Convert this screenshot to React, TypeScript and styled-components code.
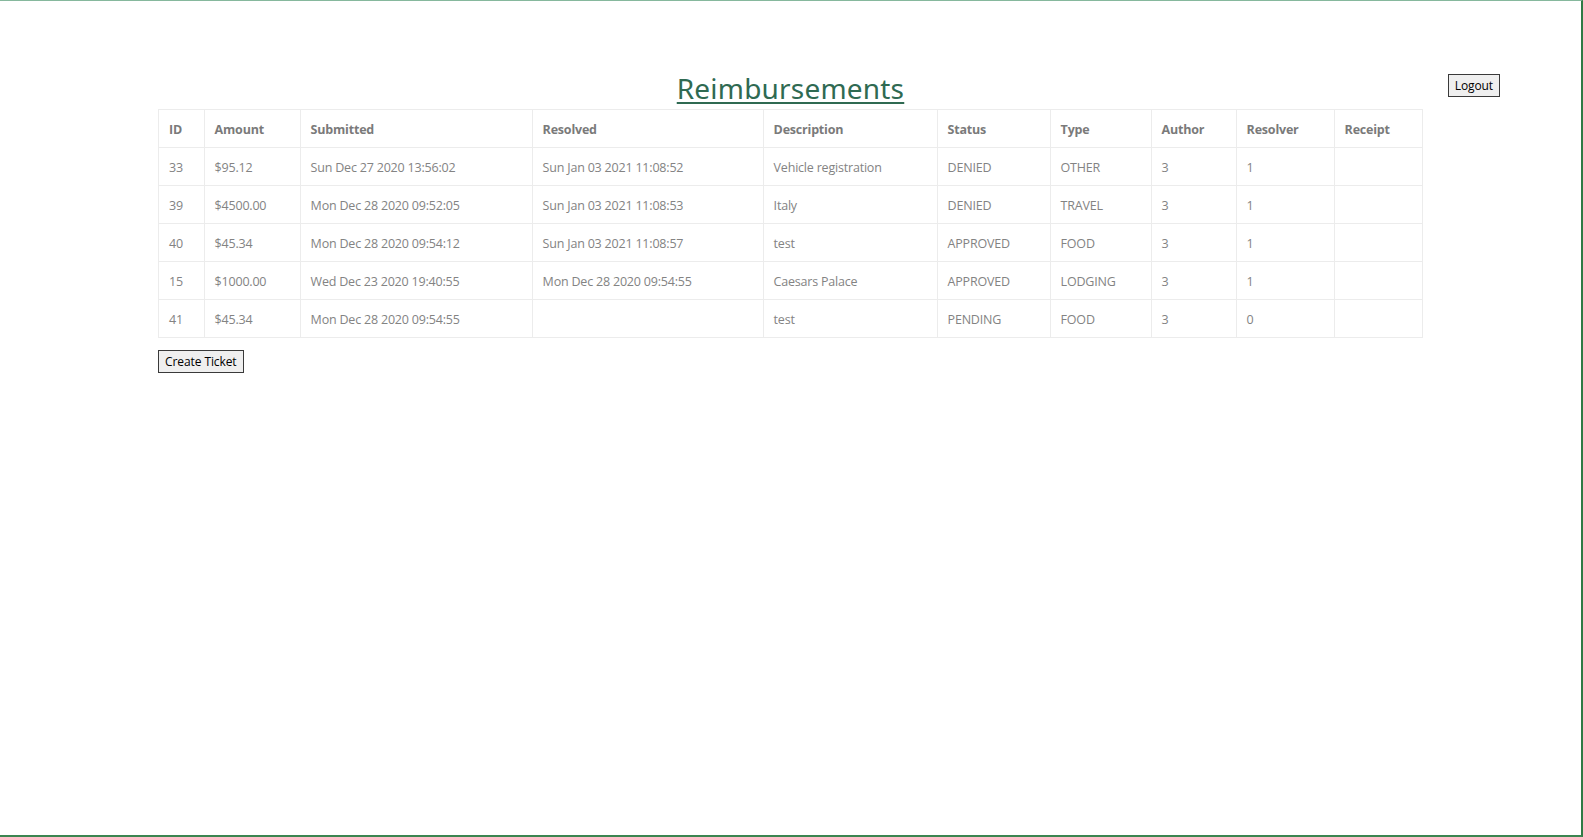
import styled, { createGlobalStyle } from "styled-components";

const GlobalStyle = createGlobalStyle`
  html, body {
    margin: 0;
    padding: 0;
    background: #ffffff;
  }
  body {
    font-family: "Open Sans", "Noto Sans", sans-serif;
  }
`;

const Frame = styled.div`
  box-sizing: border-box;
  min-height: 100vh;
  border-top: 1px solid #86b89d;
  border-right: 2px solid #2f7a45;
  border-bottom: 2px solid #3b8550;
  padding-top: 68px;
`;

const Header = styled.header`
  display: grid;
  grid-template-columns: 1fr auto 1fr;
  align-items: start;
  margin-bottom: 2px;
`;

const Title = styled.h2`
  grid-column: 2;
  margin: 0;
  font-family: "Noto Sans", sans-serif;
  font-weight: 400;
  font-size: 28px;
  line-height: 38px;
  letter-spacing: 0.2px;
  color: #2f6a52;
  text-decoration: underline;
  text-underline-offset: 3px;
  text-decoration-thickness: 2px;
`;

const Button = styled.button`
  font-family: "Open Sans", "Noto Sans", sans-serif;
  font-size: 12px;
  letter-spacing: -0.1px;
  color: #000;
  background: #efefef;
  border: 1px solid #3a3a3a;
  border-radius: 0;
  padding: 1px 6px;
  height: 23px;
  cursor: pointer;
`;

const LogoutButton = styled(Button)`
  grid-column: 3;
  justify-self: end;
  margin-top: 5px;
  margin-right: 81px;
`;

const Table = styled.table`
  width: 80%;
  margin-left: 10%;
  border-collapse: collapse;
  table-layout: fixed;
  font-size: 12.5px;
  letter-spacing: -0.2px;
`;

const Col = styled.col<{ $w: number }>`
  width: ${(p) => p.$w}px;
`;

const Th = styled.th`
  box-sizing: border-box;
  height: 38px;
  padding: 1px 10px 0;
  text-align: left;
  font-weight: 700;
  color: #7a7a7a;
  border: 1px solid #ececec;
  white-space: nowrap;
`;

const Td = styled.td`
  box-sizing: border-box;
  height: 38px;
  padding: 1px 10px 0;
  text-align: left;
  color: #838383;
  border: 1px solid #ececec;
  white-space: nowrap;
`;

const Footer = styled.div`
  margin: 11px 0 0 10%;
`;

const columns: [string, number][] = [
  ["ID", 45.5],
  ["Amount", 96],
  ["Submitted", 232],
  ["Resolved", 231],
  ["Description", 174],
  ["Status", 113],
  ["Type", 101],
  ["Author", 85],
  ["Resolver", 98],
  ["Receipt", 88.5],
];

const rows = [
  ["33", "$95.12", "Sun Dec 27 2020 13:56:02", "Sun Jan 03 2021 11:08:52", "Vehicle registration", "DENIED", "OTHER", "3", "1", ""],
  ["39", "$4500.00", "Mon Dec 28 2020 09:52:05", "Sun Jan 03 2021 11:08:53", "Italy", "DENIED", "TRAVEL", "3", "1", ""],
  ["40", "$45.34", "Mon Dec 28 2020 09:54:12", "Sun Jan 03 2021 11:08:57", "test", "APPROVED", "FOOD", "3", "1", ""],
  ["15", "$1000.00", "Wed Dec 23 2020 19:40:55", "Mon Dec 28 2020 09:54:55", "Caesars Palace", "APPROVED", "LODGING", "3", "1", ""],
  ["41", "$45.34", "Mon Dec 28 2020 09:54:55", "", "test", "PENDING", "FOOD", "3", "0", ""],
];

export default function App() {
  return (
    <>
      <GlobalStyle />
      <Frame>
        <Header>
          <Title>Reimbursements</Title>
          <LogoutButton>Logout</LogoutButton>
        </Header>
        <Table>
          <colgroup>
            {columns.map(([name, w]) => (
              <Col key={name} $w={w} />
            ))}
          </colgroup>
          <thead>
            <tr>
              {columns.map(([name]) => (
                <Th key={name}>{name}</Th>
              ))}
            </tr>
          </thead>
          <tbody>
            {rows.map((row) => (
              <tr key={row[0]}>
                {row.map((cell, i) => (
                  <Td key={i}>{cell}</Td>
                ))}
              </tr>
            ))}
          </tbody>
        </Table>
        <Footer>
          <Button>Create Ticket</Button>
        </Footer>
      </Frame>
    </>
  );
}
